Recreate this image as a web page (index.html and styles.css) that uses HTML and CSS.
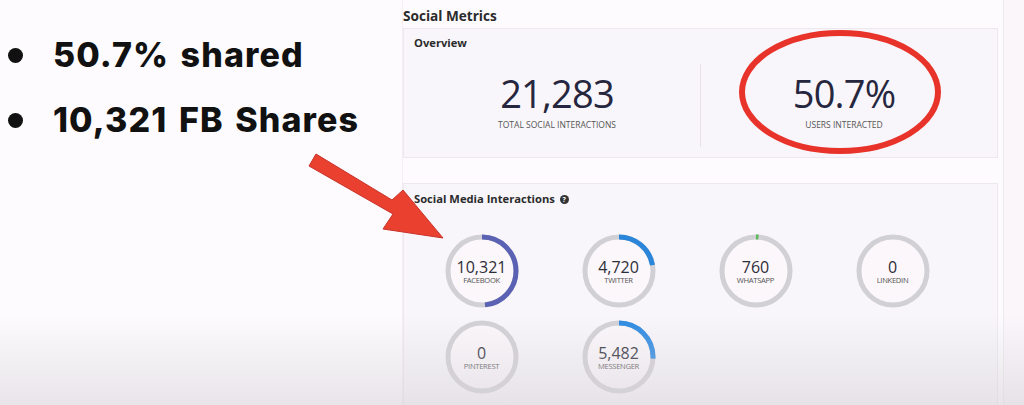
FILE: index.html
```html
<!DOCTYPE html>
<html>
<head>
  <title>Social Metrics</title>
  <link rel="stylesheet" href="styles.css">
</head>
<body>

  <!-- Slide notes -->
  <div class="notes">
    <ul>
      <li>50.7% shared</li>
      <li>10,321 FB Shares</li>
    </ul>
  </div>

  <!-- Dashboard -->
  <div class="dash">
    <h2>Social Metrics</h2>

    <div class="card overview">
      <h3>Overview</h3>
      <div class="stats">
        <div class="stat">
          <div class="big">21,283</div>
          <div class="cap">Total Social Interactions</div>
        </div>
        <div class="stat">
          <div class="big">50.7%</div>
          <div class="cap">Users Interacted</div>
        </div>
      </div>
    </div>

    <div class="card media">
      <h3>Social Media Interactions <span class="help">?</span></h3>
      <div class="donuts">
        <div class="donut">
          <svg viewBox="0 0 74 74"><circle class="track" cx="37" cy="37" r="34"/><circle class="arc" cx="37" cy="37" r="34" stroke="#5b62b3" stroke-dasharray="103.6 300"/></svg>
          <div class="val"><b>10,321</b><span>Facebook</span></div>
        </div>
        <div class="donut">
          <svg viewBox="0 0 74 74"><circle class="track" cx="37" cy="37" r="34"/><circle class="arc" cx="37" cy="37" r="34" stroke="#2b86d9" stroke-dasharray="47.4 300"/></svg>
          <div class="val"><b>4,720</b><span>Twitter</span></div>
        </div>
        <div class="donut">
          <svg viewBox="0 0 74 74"><circle class="track" cx="37" cy="37" r="34"/><circle class="arc" cx="37" cy="37" r="34" stroke="#5cba5c" stroke-dasharray="5 300" stroke-dashoffset="2.5"/></svg>
          <div class="val"><b>760</b><span>WhatsApp</span></div>
        </div>
        <div class="donut">
          <svg viewBox="0 0 74 74"><circle class="track" cx="37" cy="37" r="34"/></svg>
          <div class="val"><b>0</b><span>LinkedIn</span></div>
        </div>
        <div class="donut">
          <svg viewBox="0 0 74 74"><circle class="track" cx="37" cy="37" r="34"/></svg>
          <div class="val"><b>0</b><span>Pinterest</span></div>
        </div>
        <div class="donut">
          <svg viewBox="0 0 74 74"><circle class="track" cx="37" cy="37" r="34"/><circle class="arc" cx="37" cy="37" r="34" stroke="#2b8ae2" stroke-dasharray="55 300"/></svg>
          <div class="val"><b>5,482</b><span>Messenger</span></div>
        </div>
      </div>
    </div>
  </div>

  <div class="edge"></div>

  <!-- Annotations drawn over the screenshot -->
  <svg class="marks" width="1024" height="405" viewBox="0 0 1024 405">
    <ellipse cx="840" cy="92" rx="98" ry="59" fill="none" stroke="#e8332b" stroke-width="6"/>
    <polygon points="316,154 392,200 403,190 443,238 383,229 393,214 309,166" fill="#e9402f" stroke="#c9322a" stroke-width="1"/>
  </svg>

</body>
</html>
```

FILE: styles.css
```css
body {
  margin: 0;
  width: 1024px;
  height: 405px;
  overflow: hidden;
  display: flex;
  background: #fdfbfd;
  font-family: "Open Sans", sans-serif;
  color: #333;
  position: relative;
}
body::after {
  content: "";
  position: absolute;
  left: 0;
  right: 0;
  bottom: 0;
  height: 90px;
  background: linear-gradient(rgba(225, 220, 228, 0), rgba(215, 210, 218, 0.55));
  pointer-events: none;
}
.notes {
  width: 402px;
  flex: none;
  border-right: 1px solid #f3eff4;
}
.notes ul {
  margin: 0;
  padding: 22px 0 0 53px;
  list-style: none;
}
.notes li {
  position: relative;
  font-family: Inter, sans-serif;
  font-weight: 800;
  font-size: 34px;
  line-height: 65px;
  letter-spacing: 1.1px;
  word-spacing: 3px;
  color: #111;
}
.notes li::before {
  content: "";
  position: absolute;
  left: -45px;
  top: 26px;
  width: 15px;
  height: 15px;
  border-radius: 50%;
  background: #111;
}
.dash {
  width: 600px;
  flex: none;
  padding: 0 5px 0 0;
  box-sizing: border-box;
}
.dash h2 {
  margin: 6px 0 0;
  font-size: 13.6px;
  font-weight: 700;
  color: #2b2b2b;
  line-height: 19px;
}
.card {
  background: #f8f6fa;
  border: 1px solid #ece8ee;
  box-sizing: border-box;
}
.card h3 {
  margin: 0;
  font-size: 11.2px;
  font-weight: 700;
  color: #2b2b2b;
  line-height: 15px;
}
.overview {
  margin-top: 3px;
  height: 130px;
  padding: 6px 10px 9px;
}
.stats {
  display: flex;
  margin-top: 14px;
}
.stat {
  flex: 1;
  height: 83px;
  text-align: center;
  padding-top: 7px;
  box-sizing: border-box;
}
.stat + .stat {
  border-left: 1px solid #e6e2e8;
}
.big {
  font-size: 38px;
  line-height: 44px;
  color: #26273f;
  letter-spacing: -0.8px;
}
.cap {
  font-size: 8.5px;
  text-transform: uppercase;
  color: #555;
  margin-top: 4px;
}
.media {
  margin-top: 25px;
  height: 240px;
  padding: 7px 10px;
}
.help {
  display: inline-block;
  width: 9px;
  height: 9px;
  border-radius: 50%;
  background: #333;
  color: #fff;
  font-size: 7px;
  line-height: 9px;
  text-align: center;
  vertical-align: 1px;
  margin-left: 2px;
}
.donuts {
  display: grid;
  grid-template-columns: repeat(4, 137px);
  row-gap: 12px;
  margin-top: 28px;
  margin-left: -1px;
}
.donut {
  position: relative;
  width: 74px;
  height: 74px;
  justify-self: center;
}
.donut svg {
  width: 74px;
  height: 74px;
  display: block;
}
.track {
  fill: #fbf7fa;
  stroke: #d1d0d4;
  stroke-width: 5;
}
.arc {
  fill: none;
  stroke-width: 5;
  transform: rotate(-90deg);
  transform-origin: 37px 37px;
}
.val {
  position: absolute;
  inset: 0;
  display: flex;
  flex-direction: column;
  align-items: center;
  justify-content: center;
  padding-top: 1px;
}
.val b {
  font-weight: 400;
  font-size: 16px;
  line-height: 17px;
  color: #2e2e38;
}
.val span {
  font-size: 7.6px;
  line-height: 9px;
  text-transform: uppercase;
  color: #555;
  letter-spacing: -0.3px;
}
.edge {
  flex: 1;
  background: #faf6fa;
  border-left: 1px solid #eeeaee;
}
.marks {
  position: absolute;
  left: 0;
  top: 0;
  pointer-events: none;
}
```
